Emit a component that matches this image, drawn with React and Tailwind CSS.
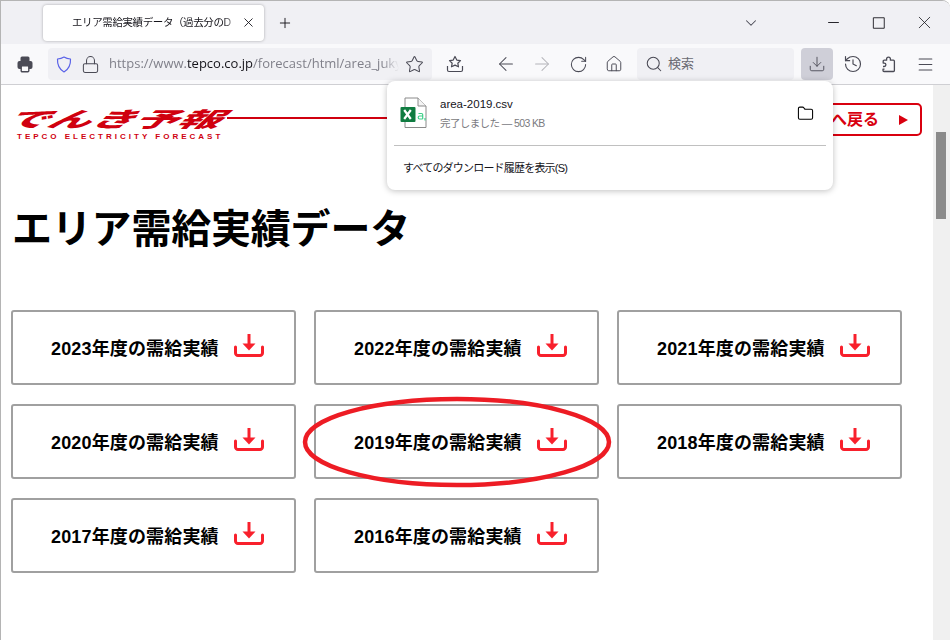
import React from "react";
import {
  ArrowLeft,
  ArrowRight,
  ChevronDown,
  Download,
  Folder,
  History,
  Home,
  Lock,
  Menu,
  Minus,
  Plus,
  RotateCw,
  Search,
  Square,
  Star,
  X,
} from "lucide-react";

const years = [2023, 2022, 2021, 2020, 2019, 2018, 2017, 2016];

const jpFont = "[font-family:'Liberation_Sans','Noto_Sans_CJK_JP',sans-serif]";

const PrintIcon = () => (
  <svg width="16" height="17" viewBox="0 0 16 17" className="text-[#4a4a55]">
    <rect x="3.500" y="0.500" width="9" height="6" rx="1.500" fill="currentColor" />
    <rect x="0.500" y="5" width="15" height="8" rx="2" fill="currentColor" />
    <rect x="4.200" y="9.700" width="7.600" height="6" rx="1" fill="#f9f9fb" stroke="currentColor" strokeWidth="1.400" />
  </svg>
);

const ShieldIcon = () => (
  <svg width="16" height="17" viewBox="0 0 16 17" fill="none" stroke="#5a62e8" strokeWidth="1.200" strokeLinejoin="round" className="shrink-0">
    <path d="M8 1c2 1.200 4 1.800 6.500 2 .3 5.500-1.500 10-6.500 13C3 13 1.200 8.500 1.500 3 4 2.800 6 2.200 8 1z" />
  </svg>
);

const PuzzleIcon = () => (
  <svg width="16" height="17" viewBox="0 0 16 17" fill="none" stroke="#4a4a55" strokeWidth="1.300" strokeLinejoin="round">
    <path d="M2 10.500h1.200a1.700 1.700 0 0 0 0-3.400H2.200V5.200a1 1 0 0 1 1-1h2.400V3a1.900 1.900 0 0 1 3.800 0v1.200h3a1 1 0 0 1 1 1v9.300a1 1 0 0 1-1 1H3a1 1 0 0 1-1-1v-1.300h1.500" />
  </svg>
);

const StarTrayIcon = () => (
  <svg width="18" height="18" viewBox="0 0 18 18" fill="none" stroke="#4a4a55" strokeWidth="1.200" strokeLinejoin="round">
    <path d="M9 1.500l1.800 3.600 3.700.5-2.700 2.600.7 3.600L9 10.100l-3.500 1.700.7-3.600-2.700-2.600 3.700-.5z" />
    <path d="M1.500 11v4a1.500 1.500 0 0 0 1.500 1.500h12a1.500 1.500 0 0 0 1.500-1.500v-4" />
  </svg>
);

const ExcelIcon = () => (
  <svg width="28" height="32" viewBox="0 0 28 32" fill="none" className="shrink-0">
    <path d="M5 1h13l8 8v21.500H5z" fill="#fff" stroke="#8a8a8a" />
    <path d="M18 1v8h8" stroke="#8a8a8a" fill="#f4f4f4" />
    <rect x="0.500" y="10" width="15" height="15" rx="1" fill="#107c41" />
    <path d="M4.200 13l3.300 4.500M10.800 13l-6.600 9M7.500 17.500l3.300 4.500" stroke="#fff" strokeWidth="2.200" />
    <path d="M18.500 16.500h3a1.200 1.200 0 0 1 1.200 1.200v4.300M22.500 19h-2.800a1.500 1.500 0 0 0 0 3h3M25 21v2.500" stroke="#3fd08a" strokeWidth="1.200" />
  </svg>
);

const DownloadMark = () => (
  <svg width="30" height="23" viewBox="0 0 30 23" fill="none" className="mb-[5px] shrink-0">
    <path d="M15 0v12" stroke="#f8202c" strokeWidth="3" />
    <path d="M8.500 9.500h13L15 16.500z" fill="#f8202c" />
    <path d="M1.500 13v6a2.500 2.500 0 0 0 2.500 2.500h22a2.500 2.500 0 0 0 2.500-2.500v-6" stroke="#f8202c" strokeWidth="3" strokeLinecap="round" />
  </svg>
);

const ToolSlot = ({ children }) => <div className="flex w-[36px] shrink-0 justify-center">{children}</div>;

const YearButton = ({ year }) => (
  <a className="flex h-[75px] items-center gap-[15px] rounded-[3px] border-2 border-[#a0a0a0] bg-white pl-[38px]">
    <span className={`${jpFont} pt-[3px] text-[18px] font-bold tracking-[0.15px] text-black`}>{year}年度の需給実績</span>
    <DownloadMark />
  </a>
);

const Logo = () => (
  <div className="flex w-[380px] flex-col">
    <div className="flex h-[24px] items-center">
      <span className="mr-[110px] w-[105px] shrink-0 origin-left text-[21px] leading-[24px] font-black whitespace-nowrap text-[#d0000f] [font-family:'Noto_Sans_CJK_JP',sans-serif] [transform:scaleX(2.050)_skewX(-28deg)]">
        でんき予報
      </span>
      <div className="h-[2.500px] flex-1 bg-[#d0000f]" />
    </div>
    <span className="mt-[2px] ml-[5px] text-[8px] leading-[10px] font-bold tracking-[3px] whitespace-nowrap text-[#d0000f] [font-family:'Liberation_Sans',sans-serif]">
      TEPCO ELECTRICITY FORECAST
    </span>
  </div>
);

const App = () => {
  return (
    <div className={`${jpFont} relative flex h-[640px] w-[950px] flex-col overflow-hidden rounded-tr-[8px] border-t border-l border-[#b4b4b4] bg-white`}>
      {/* Tab strip */}
      <div className="flex h-[43px] shrink-0 items-center bg-[#f0f0f4] pl-[42px] text-[#15141a]">
        <div className="flex h-[36px] w-[221px] items-center rounded-[4px] bg-white pr-[8px] pl-[29px] shadow-[0_0_3px_rgba(0,0,0,0.3)]">
          <span className="w-[168px] overflow-hidden text-[10.500px] tracking-[-0.4px] whitespace-nowrap [mask-image:linear-gradient(to_right,black_90%,transparent)]">
            エリア需給実績データ（過去分のD
          </span>
          <X size={15} strokeWidth={1.4} className="ml-auto" />
        </div>
        <Plus size={16} strokeWidth={1.4} className="ml-[13px]" />
        <ChevronDown size={18} strokeWidth={1.4} className="ml-[449px] text-[#4a4a55]" />
        <Minus size={17} strokeWidth={1.3} className="ml-[65px]" />
        <Square size={14} strokeWidth={1.5} className="ml-[30px] [&_rect]:[rx:0]" />
        <X size={21} strokeWidth={0.9} className="ml-[28px]" />
      </div>

      {/* Toolbar */}
      <div className="flex h-[41px] shrink-0 items-center border-b border-[#cfcfd3] bg-[#f9f9fb] text-[#4a4a55]">
        <div className="flex w-[47px] shrink-0 justify-center">
          <PrintIcon />
        </div>
        <div className="flex h-[32px] w-[384px] shrink-0 items-center rounded-[4px] bg-[#f0f0f4]">
          <div className="ml-[8px]">
            <ShieldIcon />
          </div>
          <Lock size={19} strokeWidth={1.3} className="ml-[9px] shrink-0" />
          <span className="ml-[9px] w-[290px] overflow-hidden text-[13px] whitespace-nowrap text-[#80808a] [font-family:'Open_Sans',sans-serif] [mask-image:linear-gradient(to_right,black_94%,transparent)]">
            https://www.<span className="text-[#15141a]">tepco.co.jp</span>/forecast/html/area_juky
          </span>
          <Star size={19} strokeWidth={1.3} className="ml-[6px] shrink-0" />
        </div>
        <div className="ml-[14px]">
          <StarTrayIcon />
        </div>
        <div className="ml-[24px] flex items-center">
          <ToolSlot>
            <ArrowLeft size={22} strokeWidth={1.1} />
          </ToolSlot>
          <ToolSlot>
            <ArrowRight size={22} strokeWidth={1.1} className="text-[#b4b4ba]" />
          </ToolSlot>
          <ToolSlot>
            <RotateCw size={19} strokeWidth={1.3} />
          </ToolSlot>
          <ToolSlot>
            <Home size={18} strokeWidth={1.3} />
          </ToolSlot>
        </div>
        <div className="ml-[5px] flex h-[32px] w-[157px] shrink-0 items-center rounded-[4px] bg-[#f0f0f4] pl-[8px]">
          <Search size={18} strokeWidth={1.4} />
          <span className="ml-[5px] text-[13px] text-[#6a6a72]">検索</span>
        </div>
        <div className="ml-[7px] flex h-[32px] w-[32px] shrink-0 items-center justify-center rounded-[4px] bg-[#cfcfd8]">
          <Download size={18} strokeWidth={1.2} />
        </div>
        <div className="ml-[2px] flex items-center">
          <ToolSlot>
            <History size={20} strokeWidth={1.4} />
          </ToolSlot>
          <ToolSlot>
            <PuzzleIcon />
          </ToolSlot>
          <ToolSlot>
            <Menu size={19} strokeWidth={1.3} />
          </ToolSlot>
        </div>
      </div>

      {/* Page */}
      <div className="flex min-h-0 flex-1">
        <main className="min-w-0 flex-1 pt-[18px] pr-[11px] pl-[10px]">
          <header className="flex items-start justify-between">
            <div className="pt-[3px] pl-[1px]">
              <Logo />
            </div>
            <a className="flex h-[33px] w-[122px] items-center justify-end gap-[20px] rounded-[5px] border-2 border-[#d9000f] pr-[12px] text-[16px] font-bold text-[#d9000f]">
              へ戻る
              <span className="h-0 w-0 border-y-[5px] border-l-[9px] border-y-transparent border-l-[#d9000f]" />
            </a>
          </header>
          <h1 className="mt-[63px] ml-[1px] text-[40px] leading-[48px] font-bold tracking-[-0.2px] text-black">エリア需給実績データ</h1>
          <div className="mt-[57px] grid w-[891px] grid-cols-3 gap-x-[18px] gap-y-[19px]">
            {years.map((year) => (
              <YearButton key={year} year={year} />
            ))}
          </div>
        </main>
        {/* Scrollbar */}
        <div className="w-[17px] shrink-0 bg-[#f0f0f0] pt-[47px] pl-[3px]">
          <div className="h-[87px] w-[10px] bg-[#8b8b8b]" />
        </div>
      </div>

      {/* Downloads panel */}
      <div className="absolute top-[80px] left-[386px] w-[446px] rounded-[8px] bg-white px-[7px] text-[#15141a] shadow-[0_1px_6px_rgba(0,0,0,0.25)]">
        <div className="flex h-[65px] items-center border-b border-[#c0c0c0] pr-[12px] pl-[6px]">
          <ExcelIcon />
          <div className="ml-[12px] flex flex-col">
            <span className="text-[11.500px] leading-[16px]">area-2019.csv</span>
            <span className="mt-[3px] text-[10.500px] leading-[16px] tracking-[-0.6px] text-[#7a7a80]">完了しました — 503 KB</span>
          </div>
          <Folder size={17} strokeWidth={1.5} className="ml-auto text-black" />
        </div>
        <div className="flex h-[44px] items-center pl-[9px] text-[11px] tracking-[-0.8px]">すべてのダウンロード履歴を表示(S)</div>
      </div>

      {/* Red circle drawn around 2019 */}
      <svg width="320" height="96" viewBox="0 0 320 96" fill="none" className="pointer-events-none absolute top-[394px] left-[296px]">
        <ellipse cx="160" cy="47" rx="152" ry="43" stroke="#ed1c24" strokeWidth="4.500" />
      </svg>
    </div>
  );
};

export default App;
